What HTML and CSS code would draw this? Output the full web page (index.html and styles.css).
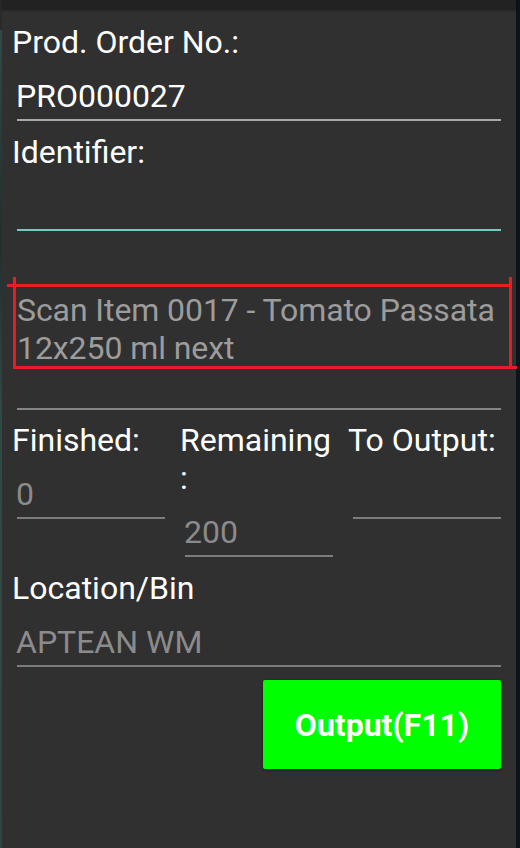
FILE: index.html
```html
<!DOCTYPE html>
<html>
<head>
<meta charset="utf-8">
<link rel="stylesheet" href="styles.css">
</head>
<body>
<div class="screen">
  <div class="strip-left"></div>
  <div class="panel">
    <div class="topbar"></div>
    <div class="content">
      <div class="label first">Prod. Order No.:</div>
      <div class="field light"><span class="value white">PRO000027</span></div>

      <div class="label gap">Identifier:</div>
      <div class="field focused"><span class="value">&nbsp;</span></div>

      <div class="scan">
        <div class="scan-text">Scan Item 0017 - Tomato Passata 12x250 ml next</div>
        <div class="mark"><span class="tick tick-left"></span><span class="tick tick-right"></span></div>
      </div>
      <div class="field plain"><span class="value">&nbsp;</span></div>

      <div class="cols">
        <div class="col">
          <div class="label">Finished:</div>
          <div class="field"><span class="value">0</span></div>
        </div>
        <div class="col">
          <div class="label">Remaining<br>:</div>
          <div class="field"><span class="value">200</span></div>
        </div>
        <div class="col">
          <div class="label">To Output:</div>
          <div class="field"><span class="value">&nbsp;</span></div>
        </div>
      </div>

      <div class="label gap">Location/Bin</div>
      <div class="field"><span class="value">APTEAN WM</span></div>

      <div class="actions">
        <button class="btn">Output(F11)</button>
      </div>
    </div>
  </div>
  <div class="strip-right"></div>
</div>
</body>
</html>
```

FILE: styles.css
```css
* { box-sizing: border-box; }
html, body { margin: 0; padding: 0; }
body {
  width: 520px;
  height: 848px;
  overflow: hidden;
  background: #0c131b;
  font-family: Roboto, "Noto Sans", sans-serif;
}
.screen {
  display: flex;
  height: 848px;
}
.strip-left {
  width: 2px;
  background: linear-gradient(#2a2a2a 0, #2a2a2a 30px, #2e4a48 30px, #1f2f30 240px, #2e4a48 420px, #2c4544 848px);
}
.strip-right {
  width: 4px;
  background: #0c131b;
}
.panel {
  flex: 1;
  background: #303030;
  display: flex;
  flex-direction: column;
}
.topbar {
  height: 9px;
  background: #222222;
  box-shadow: 0 1px 3px rgba(0, 0, 0, 0.45);
  position: relative;
  z-index: 1;
}
.content {
  display: flex;
  flex-direction: column;
  padding-left: 10px;
}
.label {
  font-size: 32px;
  line-height: 37.5px;
  color: #ffffff;
  margin-bottom: 16.5px;
}
.label.first { margin-top: 15px; }
.label.gap { margin-top: 13px; }
.field {
  margin-left: 5px;
  margin-right: 15px;
  padding-bottom: 3.5px;
  border-bottom: 2px solid #7c7c7c;
  font-size: 32px;
  line-height: 37.5px;
  color: #8b8b8b;
}
.field.light { border-bottom-color: #a9a9a9; }
.field.focused { border-bottom-color: #76c9c1; }
.field.plain { border-bottom-color: #858585; }
.value { display: block; margin-left: -1px; white-space: nowrap; }
.value.white { color: #ffffff; }
.scan {
  position: relative;
  margin-top: 61px;
}
.scan-text {
  font-size: 32px;
  line-height: 37.5px;
  color: #9c9c9c;
  padding-left: 5px;
  letter-spacing: -0.08px;
}
.mark {
  position: absolute;
  left: 1px;
  top: -8px;
  width: 499px;
  height: 85px;
  border: 3px solid #e31e24;
}
.mark::before {
  content: "";
  position: absolute;
  left: -9px;
  top: -3px;
  width: 9px;
  height: 3px;
  background: #e31e24;
}
.mark::after {
  content: "";
  position: absolute;
  right: -8px;
  bottom: -3px;
  width: 8px;
  height: 3px;
  background: #e31e24;
}
.tick {
  position: absolute;
  top: -10px;
  width: 3px;
  height: 7px;
  background: #e31e24;
}
.tick-left { left: -3px; }
.tick-right { right: -3px; }
.cols {
  display: grid;
  grid-template-columns: 168px 168px 1fr;
  margin-top: 12px;
}
.col { display: flex; flex-direction: column; }
.actions {
  display: flex;
  justify-content: flex-end;
  margin-top: 13.5px;
  padding-right: 15px;
}
.btn {
  width: 238px;
  height: 89px;
  border: none;
  border-radius: 2px;
  background: #00ff00;
  color: #ffffff;
  font-family: Roboto, "Noto Sans", sans-serif;
  font-weight: 700;
  font-size: 32px;
  padding: 0;
  box-shadow: 0 1px 3px rgba(0, 0, 0, 0.5);
}
```
